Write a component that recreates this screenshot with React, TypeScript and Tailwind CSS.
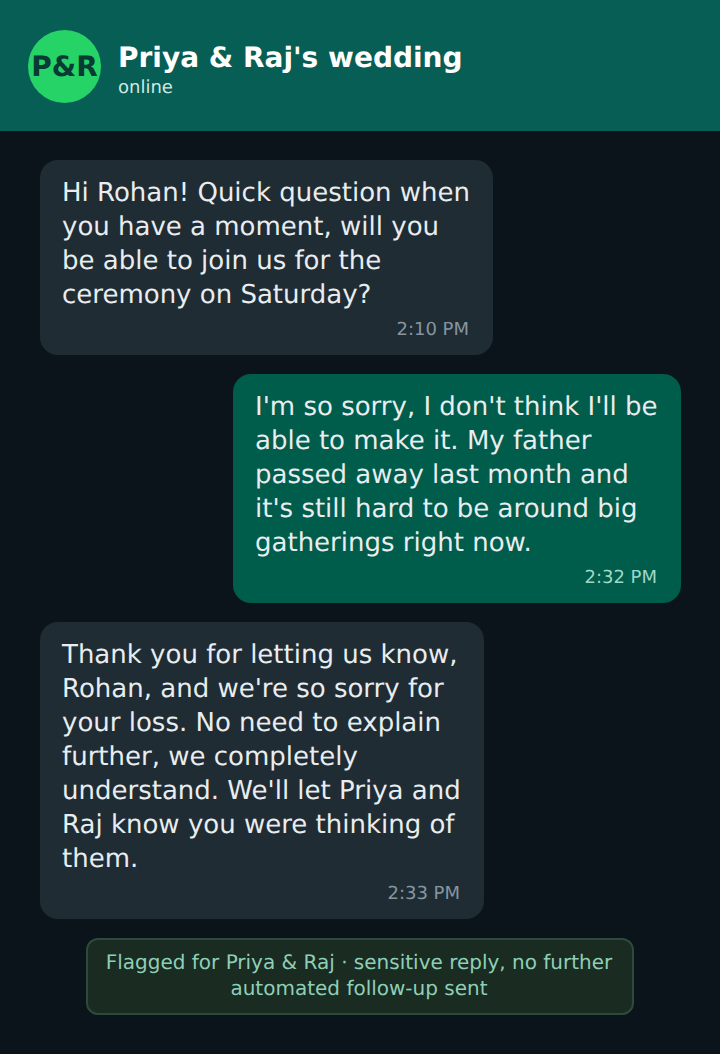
import React from 'react';

const messages = [
  { text: "Hi Rohan! Quick question when you have a moment, will you be able to join us for the ceremony on Saturday?", time: '2:10 PM', mine: false, width: 'w-[453px]' },
  { text: "I'm so sorry, I don't think I'll be able to make it. My father passed away last month and it's still hard to be around big gatherings right now.", time: '2:32 PM', mine: true, width: 'w-[448px]' },
  { text: "Thank you for letting us know, Rohan, and we're so sorry for your loss. No need to explain further, we completely understand. We'll let Priya and Raj know you were thinking of them.", time: '2:33 PM', mine: false, width: 'w-[444px]' },
];

export default function App() {
  return (
    <div className="min-h-[1054px] bg-[#0b141a] font-['DejaVu_Sans',sans-serif] [text-rendering:geometricPrecision]">
      <header className="flex h-[131px] items-center gap-[17px] bg-[#075e54] px-[28px] pt-[2px]">
        <div className="flex h-[73px] w-[73px] items-center justify-center rounded-full bg-[#25d366] pt-[1px] text-[28px] font-bold text-[#073b33]">
          P&amp;R
        </div>
        <div className="pt-[8px]">
          <div className="text-[28px] leading-[34px] font-bold text-white">Priya &amp; Raj's wedding</div>
          <div className="mt-[1px] text-[18px] leading-[24px] text-[#cfe9e3]">online</div>
        </div>
      </header>
      <main className="flex flex-col gap-[19px] pr-[39px] pl-[40px] pt-[29px]">
        {messages.map((m) => (
          <div
            key={m.time}
            className={`${m.width} rounded-[18px] px-[22px] pt-[16px] pb-[14px] ${m.mine ? 'self-end bg-[#005c4b]' : 'self-start bg-[#1f2c34]'}`}
          >
            <p className="text-[26px] leading-[34px] text-[#e9edef]">{m.text}</p>
            <div className={`mt-[7px] pr-[2px] text-right text-[18px] leading-[22px] ${m.mine ? 'text-[#9fd8c8]' : 'text-[#8696a0]'}`}>{m.time}</div>
          </div>
        ))}
        <div className="ml-[46px] w-[548px] rounded-[12px] border-2 border-[#2d4a3a] bg-[#1a2b22] px-[18px] pt-[9px] pb-[12px] text-center text-[20px] leading-[26px] text-[#8ecfb7]">
          <span className="relative -left-[1px]">Flagged for Priya &amp; Raj · sensitive reply, no further automated follow-up sent</span>
        </div>
      </main>
    </div>
  );
}
